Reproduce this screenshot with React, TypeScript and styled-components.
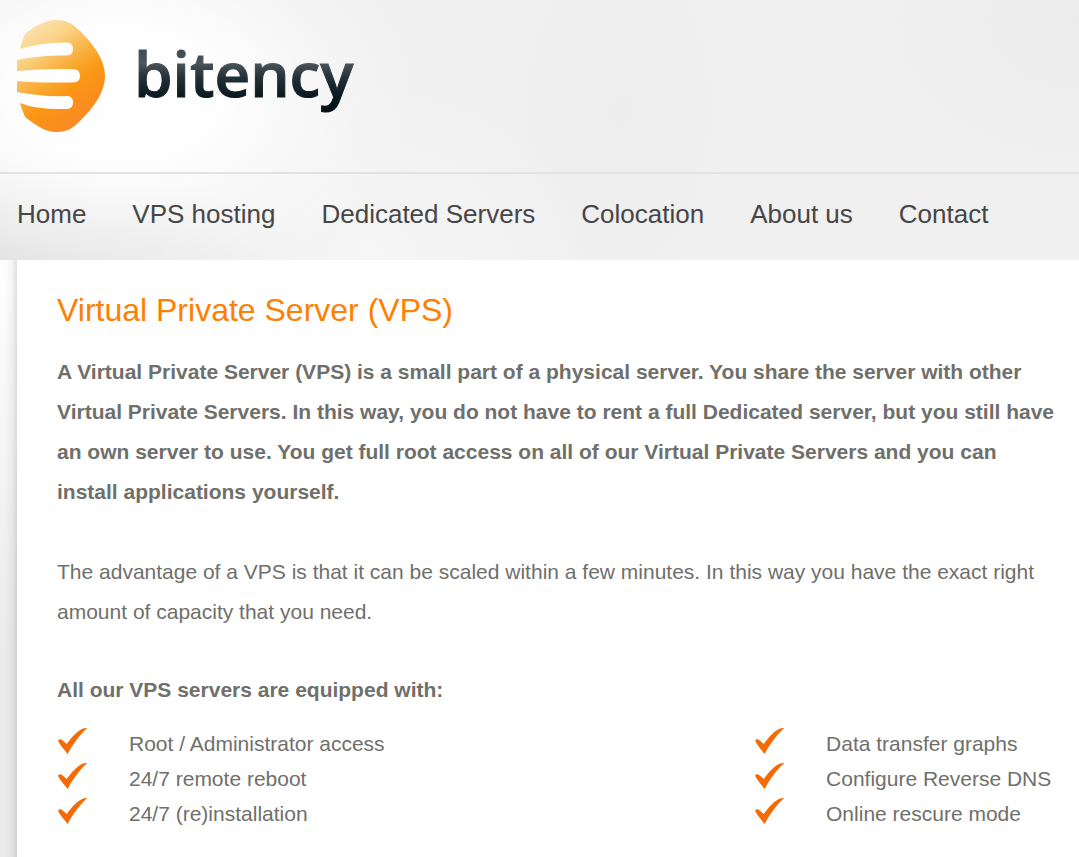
import React from "react";
import styled, { createGlobalStyle } from "styled-components";

const GlobalStyle = createGlobalStyle`
  *, *::before, *::after { box-sizing: border-box; }
  body {
    margin: 0;
    background: #fff;
    color: #6f6f6b;
    font-family: "Liberation Sans", Arial, sans-serif;
    font-size: 21px;
    line-height: 40px;
  }
`;

const Page = styled.div`
  display: flex;
  flex-direction: column;
  min-height: 100vh;
`;

const Header = styled.header`
  background:
    radial-gradient(ellipse 300px 200px at 120px 95px, #fff 0%, rgba(255, 255, 255, 0.9) 36%, rgba(255, 255, 255, 0.4) 66%, rgba(255, 255, 255, 0) 100%),
    radial-gradient(ellipse 300px 120px at 0 270px, rgba(216, 216, 216, 0.7), rgba(230, 230, 230, 0) 100%),
    radial-gradient(ellipse 220px 170px at 370px 250px, rgba(250, 250, 250, 0.6), rgba(250, 250, 250, 0)),
    radial-gradient(ellipse 110px 190px at 620px 110px, rgba(233, 234, 233, 0.4), rgba(233, 234, 233, 0)),
    radial-gradient(ellipse 200px 150px at 100% 20px, rgba(232, 232, 232, 0.5), rgba(232, 232, 232, 0)),
    #f0f0f0;
`;

const Brand = styled.div`
  padding: 20px 17px 40px;
  border-bottom: 2px solid #e2e2e2;
`;

const HomeLink = styled.a`
  display: block;
  width: 340px;
  height: 112px;
`;

const NavList = styled.ul`
  display: flex;
  flex-wrap: wrap;
  gap: 0 46px;
  margin: 0;
  padding: 20px 17px 24px;
  list-style: none;
`;

const NavItem = styled.li`
  height: 42px;
`;

const NavLink = styled.a`
  color: #464646;
  font-size: 26px;
  text-decoration: none;
`;

const Body = styled.div`
  display: flex;
  flex: 1;
`;

const EdgeShadow = styled.div`
  flex: 0 0 17px;
  background:
    linear-gradient(to right, rgba(0, 0, 0, 0) 20%, rgba(0, 0, 0, 0.04) 70%, rgba(0, 0, 0, 0.12) 100%),
    linear-gradient(to bottom, #fff 0, #ebebeb 400px);
`;

const Content = styled.main`
  flex: 1;
  min-width: 0;
  padding: 30px 20px 26px 40px;
`;

const Title = styled.h1`
  margin: 0 0 22px;
  color: #ff8000;
  font-size: 32px;
  font-weight: 400;
`;

const Paragraph = styled.p<{ $strong?: boolean }>`
  margin: 0 0 40px;
  font-weight: ${(p) => (p.$strong ? 700 : 400)};
`;

const Subtitle = styled.h2`
  margin: 0 0 18px;
  font-size: 21px;
  font-weight: 700;
  line-height: 36px;
`;

const Features = styled.div`
  display: grid;
  grid-template-columns: 16fr 7fr;
`;

const FeatureList = styled.ul`
  margin: 0;
  padding: 0;
  list-style: none;
`;

const Feature = styled.li`
  display: flex;
  align-items: center;
  gap: 42px;
  line-height: 35px;
`;

const CheckIcon = styled.svg`
  flex: none;
  width: 30px;
  height: 35px;
`;

const Check = () => (
  <CheckIcon viewBox="0 0 30 35" aria-hidden="true">
    <path
      d="M1 14.5 Q2.500 12.500 4.500 13.500 L9.800 18 C15 10.500 21 4.500 26 2.500 Q28 1.800 30.300 2 C24 7.500 17 16.500 11.500 26.500 L10.500 28 C8 24 3.500 20.500 1 14.500Z"
      fill="#f56a05"
    />
  </CheckIcon>
);

const Logo = () => (
  <svg width="340" height="112" viewBox="0 0 340 112" role="img" aria-label="bitency">
    <defs>
      <linearGradient id="amber" x1="0.1" y1="0.05" x2="0.6" y2="0.95">
        <stop offset="0" stopColor="#fbe3b4" />
        <stop offset="0.25" stopColor="#fad387" />
        <stop offset="0.55" stopColor="#f9a932" />
        <stop offset="0.72" stopColor="#fa9614" />
        <stop offset="1" stopColor="#fb8a22" />
      </linearGradient>
      <linearGradient id="ink" gradientUnits="userSpaceOnUse" x1="0" y1="28" x2="0" y2="86">
        <stop offset="0" stopColor="#3d4a51" />
        <stop offset="0.26" stopColor="#4b555b" />
        <stop offset="0.5" stopColor="#243139" />
        <stop offset="0.8" stopColor="#0d1b23" />
        <stop offset="1" stopColor="#06121a" />
      </linearGradient>
    </defs>
    <path
      d="M3 29 Q6 16 9 13 C20 5 29 0 39 0 C50 0 55 3 64 12 C77 25 88 40 88 56 C88 72 77 87 64 100 C55 109 50 112 39 112 C29 112 20 106 8 97 Q5 90 3 83 Q18 89 42 89 H50 Q56 89 56 82.500 Q56 76 50 76 Q25 77 0 72 V61 Q18 62.500 40 62.500 H56 Q63 62.500 63 56 Q63 49 56 49 H40 Q20 49 0 51 V40 Q23 35 50 35.500 Q56 35 56 29 Q56 22.500 50 22.500 Q25 22 3 29Z"
      fill="url(#amber)"
    />
    <text
      x="117"
      y="77"
      fill="url(#ink)"
      stroke="url(#ink)"
      strokeWidth="1"
      fontFamily='"Open Sans", "Noto Sans", sans-serif'
      fontSize="62"
      fontWeight="600"
    >
      bitency
    </text>
  </svg>
);

const pages = ["Home", "VPS hosting", "Dedicated Servers", "Colocation", "About us", "Contact"];

const featureColumns = [
  ["Root / Administrator access", "24/7 remote reboot", "24/7 (re)installation"],
  ["Data transfer graphs", "Configure Reverse DNS", "Online rescure mode"],
];

export default function App() {
  return (
    <Page>
      <GlobalStyle />
      <Header>
        <Brand>
          <HomeLink href="#home">
            <Logo />
          </HomeLink>
        </Brand>
        <nav aria-label="Main">
          <NavList>
            {pages.map((name) => (
              <NavItem key={name}>
                <NavLink href={"#" + name.toLowerCase().replace(/ /g, "-")}>{name}</NavLink>
              </NavItem>
            ))}
          </NavList>
        </nav>
      </Header>
      <Body>
        <EdgeShadow />
        <Content>
          <Title>Virtual Private Server (VPS)</Title>
          <Paragraph $strong>
            A Virtual Private Server (VPS) is a small part of a physical server. You share the server with other
            Virtual Private Servers. In this way, you do not have to rent a full Dedicated server, but you still have
            an own server to use. You get full root access on all of our Virtual Private Servers and you can install
            applications yourself.
          </Paragraph>
          <Paragraph>
            The advantage of a VPS is that it can be scaled within a few minutes. In this way you have the exact right
            amount of capacity that you need.
          </Paragraph>
          <Subtitle>All our VPS servers are equipped with:</Subtitle>
          <Features>
            {featureColumns.map((column, i) => (
              <FeatureList key={i}>
                {column.map((feature) => (
                  <Feature key={feature}>
                    <Check />
                    {feature}
                  </Feature>
                ))}
              </FeatureList>
            ))}
          </Features>
        </Content>
      </Body>
    </Page>
  );
}
